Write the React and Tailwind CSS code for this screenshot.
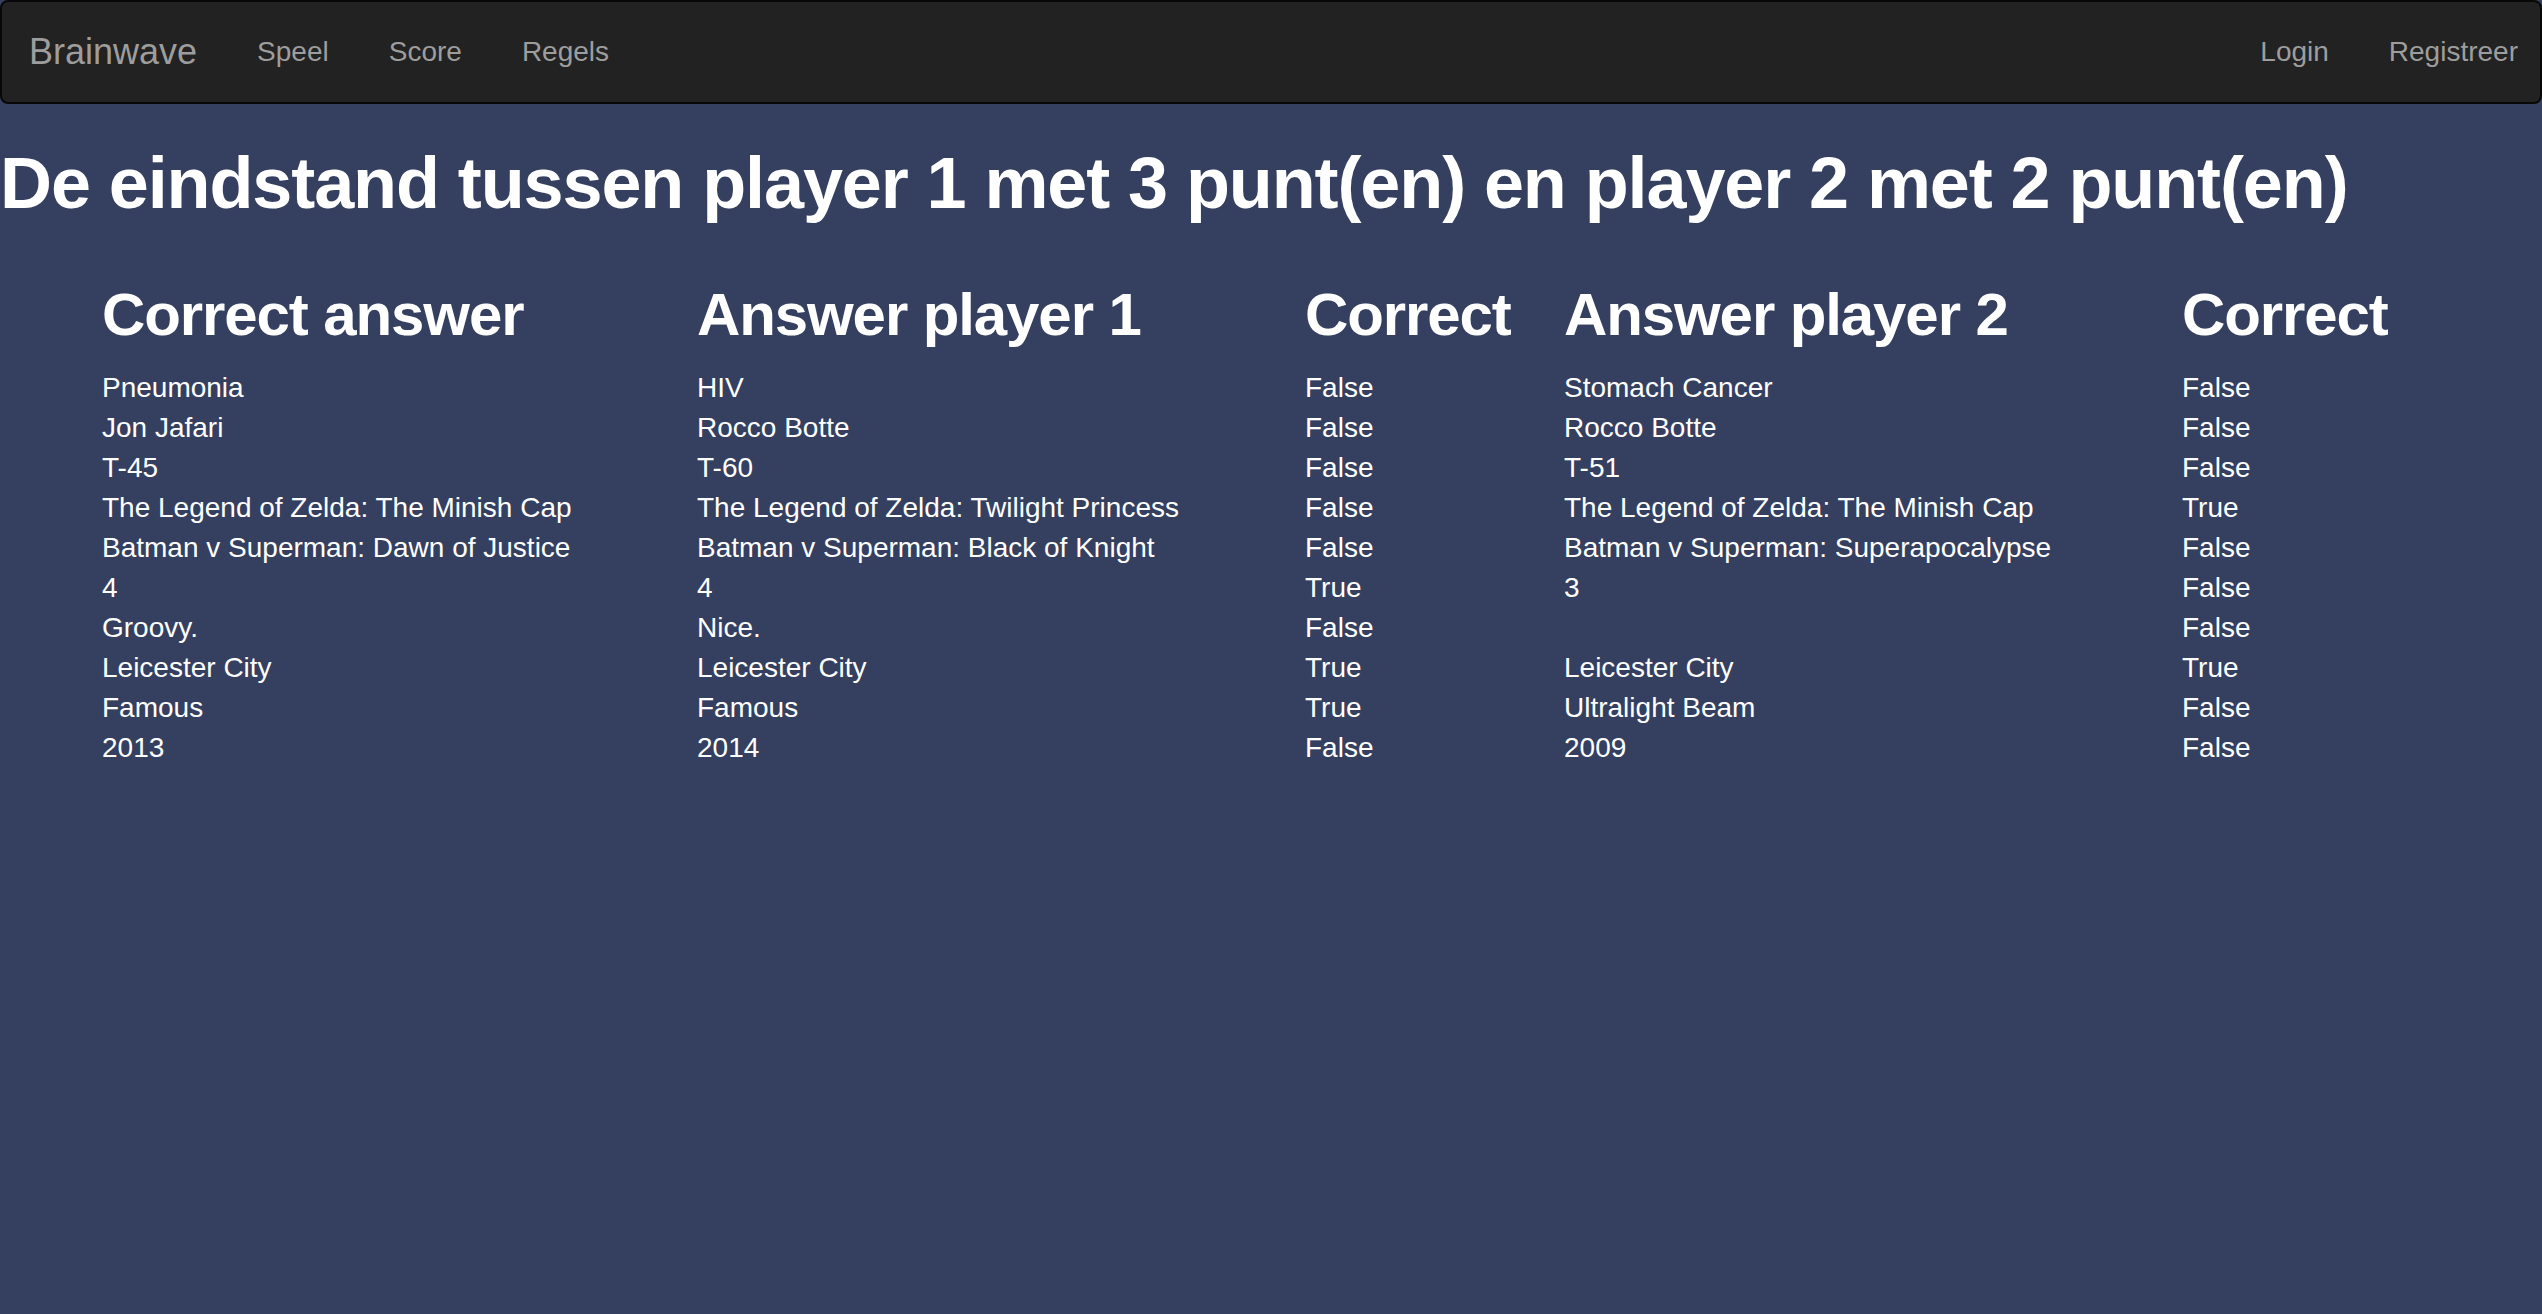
import React from 'react';

const rows = [
  ['Pneumonia', 'HIV', 'False', 'Stomach Cancer', 'False'],
  ['Jon Jafari', 'Rocco Botte', 'False', 'Rocco Botte', 'False'],
  ['T-45', 'T-60', 'False', 'T-51', 'False'],
  ['The Legend of Zelda: The Minish Cap', 'The Legend of Zelda: Twilight Princess', 'False', 'The Legend of Zelda: The Minish Cap', 'True'],
  ['Batman v Superman: Dawn of Justice', 'Batman v Superman: Black of Knight', 'False', 'Batman v Superman: Superapocalypse', 'False'],
  ['4', '4', 'True', '3', 'False'],
  ['Groovy.', 'Nice.', 'False', '', 'False'],
  ['Leicester City', 'Leicester City', 'True', 'Leicester City', 'True'],
  ['Famous', 'Famous', 'True', 'Ultralight Beam', 'False'],
  ['2013', '2014', 'False', '2009', 'False'],
];

const columns = [
  { title: 'Correct answer', width: 'w-[595px]' },
  { title: 'Answer player 1', width: 'w-[608px]' },
  { title: 'Correct', width: 'w-[259px]' },
  { title: 'Answer player 2', width: 'w-[618px]' },
  { title: 'Correct', width: 'w-[300px]' },
];

const Navbar = () => (
  <nav className="h-[104px] bg-[#222222] border-2 border-[#080808] rounded-lg flex items-center justify-between text-[#9d9d9d]">
    <div className="flex items-center">
      <a className="pl-[27px] pr-[30px] text-[36px] leading-[40px]">Brainwave</a>
      <a className="px-[30px] text-[28px] leading-[40px]">Speel</a>
      <a className="px-[30px] text-[28px] leading-[40px]">Score</a>
      <a className="px-[30px] text-[28px] leading-[40px]">Regels</a>
    </div>
    <div className="flex items-center pr-[22px]">
      <a className="px-[30px] text-[28px] leading-[40px]">Login</a>
      <a className="pl-[30px] text-[28px] leading-[40px]">Registreer</a>
    </div>
  </nav>
);

const App = () => {
  return (
    <div
      className="min-h-[1314px] bg-[#353f5f] text-white"
      style={{ fontFamily: '"Liberation Sans", Arial, sans-serif' }}
    >
      <Navbar />
      <h1 className="mt-[40px] text-[72px] leading-[79px] font-bold tracking-[-1.1px]">
        De eindstand tussen player 1 met 3 punt(en) en player 2 met 2 punt(en)
      </h1>

      <div className="mt-[59px] pl-[102px] flex">
        {columns.map((col, i) => (
          <div key={i} className={col.width}>
            <h2 className="text-[60px] leading-[66px] font-bold tracking-[-1.1px] mb-[20px] whitespace-nowrap">{col.title}</h2>
            {rows.map((row, j) => (
              <div key={j} className="text-[28px] leading-[40px] h-[40px] whitespace-nowrap">
                {row[i]}
              </div>
            ))}
          </div>
        ))}
      </div>
    </div>
  );
};

export default App;
